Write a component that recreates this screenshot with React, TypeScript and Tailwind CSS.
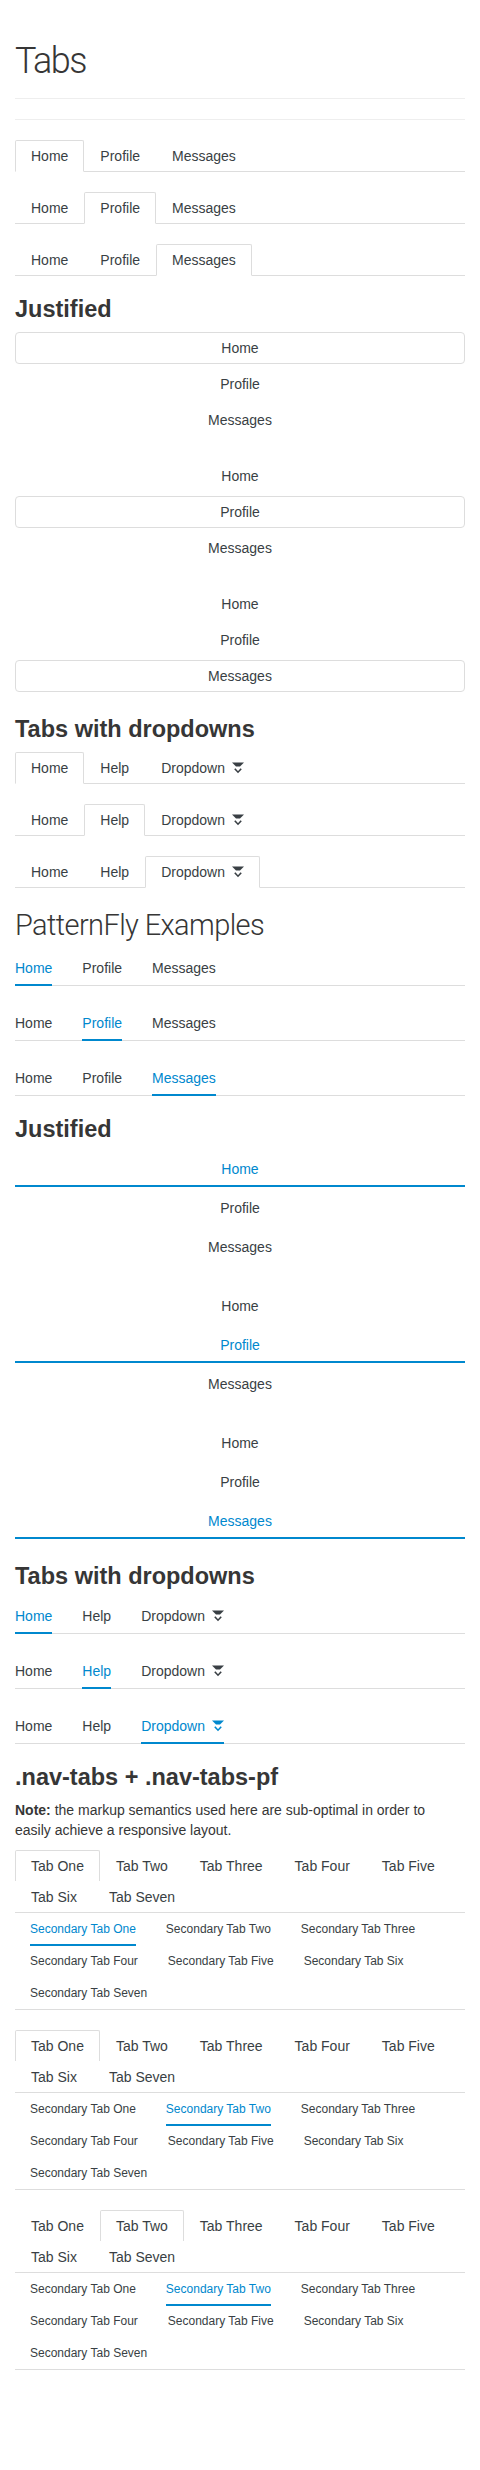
import clsx from "clsx";

function Caret({ className }: { className?: string }) {
  return (
    <svg width="12" height="13" viewBox="0 0 12 13" className={clsx("ml-[7px] inline-block", className)} fill="none">
      <polygon points="0,0.5 12,0.5 8,4.5 4,4.5" fill="currentColor" />
      <path d="M2.8 6.8 L6 10.2 L9.2 6.8" stroke="currentColor" strokeWidth="1.6" />
    </svg>
  );
}

function TabLabel({ label }: { label: string }) {
  if (label === "Dropdown") {
    return (
      <span className="inline-flex items-center">
        Dropdown
        <Caret />
      </span>
    );
  }
  return <>{label}</>;
}

function ClassicTabs({ items, active }: { items: string[]; active: number }) {
  return (
    <ul className="mb-5 flex border-b border-[#ddd]">
      {items.map((t, i) => (
        <li key={t} className="-mb-px">
          <a
            className={clsx(
              "block rounded-t-[2px] border px-[15px] py-[5px] text-[14px] leading-[20px] text-[#393f44]",
              i === active ? "border-[#ddd] border-b-white bg-white" : "border-transparent"
            )}
          >
            <TabLabel label={t} />
          </a>
        </li>
      ))}
    </ul>
  );
}

function ClassicJustified({ active }: { active: number }) {
  return (
    <ul className="mb-5 flex flex-col">
      {["Home", "Profile", "Messages"].map((t, i) => (
        <li key={t} className="mb-[4px]">
          <a
            className={clsx(
              "block rounded-[4px] border py-[5px] text-center text-[14px] leading-[20px] text-[#393f44]",
              i === active ? "border-[#ddd]" : "border-transparent"
            )}
          >
            {t}
          </a>
        </li>
      ))}
    </ul>
  );
}

function PfTabs({ items, active }: { items: string[]; active: number }) {
  return (
    <ul className="mb-5 flex border-b border-[#ddd]">
      {items.map((t, i) => (
        <li
          key={t}
          className={clsx(
            "relative py-[7px] text-[14px] leading-[20px]",
            i > 0 && "ml-[30px]",
            i === active ? "text-[#0088ce]" : "text-[#393f44]"
          )}
        >
          <TabLabel label={t} />
          {i === active && <span className="absolute bottom-[-1px] left-0 right-0 h-[2px] bg-[#0088ce]" />}
        </li>
      ))}
    </ul>
  );
}

function PfJustified({ active }: { active: number }) {
  return (
    <ul className="mb-5 flex flex-col">
      {["Home", "Profile", "Messages"].map((t, i) => (
        <li
          key={t}
          className={clsx(
            "mb-[4px] border-b-2 pb-[6px] pt-[7px] text-center text-[14px] leading-[20px]",
            i === active ? "border-[#0088ce] text-[#0088ce]" : "border-transparent text-[#393f44]"
          )}
        >
          {t}
        </li>
      ))}
    </ul>
  );
}

const mainTabs = ["Tab One", "Tab Two", "Tab Three", "Tab Four", "Tab Five", "Tab Six", "Tab Seven"];
const secondaryTabs = [
  "Secondary Tab One",
  "Secondary Tab Two",
  "Secondary Tab Three",
  "Secondary Tab Four",
  "Secondary Tab Five",
  "Secondary Tab Six",
  "Secondary Tab Seven",
];

function TabsPf({ active, secondary }: { active: number; secondary: number }) {
  return (
    <div className="mb-5">
      <ul className="flex flex-wrap border-b border-[#ddd]">
        {mainTabs.map((t, i) => (
          <li key={t}>
            <a
              className={clsx(
                "block rounded-t-[2px] border border-b-0 px-[15px] py-[5px] text-[14px] leading-[20px] text-[#393f44]",
                i === active ? "border-[#ddd] bg-white" : "border-transparent"
              )}
            >
              {t}
            </a>
          </li>
        ))}
      </ul>
      <ul className="flex flex-wrap border-b border-[#ddd]">
        {secondaryTabs.map((t, i) => (
          <li
            key={t}
            className={clsx(
              "relative px-[15px] py-[6px] text-[12px] leading-[20px]",
              i === secondary ? "text-[#0088ce]" : "text-[#393f44]"
            )}
          >
            {t}
            {i === secondary && <span className="absolute bottom-[-1px] left-[15px] right-[15px] h-[2px] bg-[#0088ce]" />}
          </li>
        ))}
      </ul>
    </div>
  );
}

function H2({ children }: { children: React.ReactNode }) {
  return <h2 className="mb-[10px] text-[23.5px] font-bold leading-[26px] text-[#363636]">{children}</h2>;
}

export default function App() {
  const basic = ["Home", "Profile", "Messages"];
  const drop = ["Home", "Help", "Dropdown"];
  return (
    <div className="min-h-[2470px] bg-white px-[15px] font-['Liberation_Sans',Arial,sans-serif] text-[#363636]">
      <h1 className="border-b border-[#eee] pb-[17px] pt-[41px] font-['Roboto',sans-serif] text-[36px] font-light leading-[40px] tracking-[-1.5px] text-[#363636]">
        Tabs
      </h1>
      <div className="mb-5 mt-5 border-t border-[#eee]" />

      <ClassicTabs items={basic} active={0} />
      <ClassicTabs items={basic} active={1} />
      <ClassicTabs items={basic} active={2} />

      <H2>Justified</H2>
      <ClassicJustified active={0} />
      <ClassicJustified active={1} />
      <ClassicJustified active={2} />

      <H2>Tabs with dropdowns</H2>
      <ClassicTabs items={drop} active={0} />
      <ClassicTabs items={drop} active={1} />
      <ClassicTabs items={drop} active={2} />

      <h1 className="mb-[9px] pt-px font-['Roboto',sans-serif] text-[29px] font-light leading-[33px] tracking-[-0.6px] text-[#363636]">
        PatternFly Examples
      </h1>
      <PfTabs items={basic} active={0} />
      <PfTabs items={basic} active={1} />
      <PfTabs items={basic} active={2} />

      <H2>Justified</H2>
      <PfJustified active={0} />
      <PfJustified active={1} />
      <PfJustified active={2} />

      <H2>Tabs with dropdowns</H2>
      <PfTabs items={drop} active={0} />
      <PfTabs items={drop} active={1} />
      <PfTabs items={drop} active={2} />

      <H2>.nav-tabs + .nav-tabs-pf</H2>
      <p className="mb-[10px] text-[14px] leading-[20px] text-[#363636]">
        <strong>Note:</strong> the markup semantics used here are sub-optimal in order to
        <br />
        easily achieve a responsive layout.
      </p>
      <TabsPf active={0} secondary={0} />
      <TabsPf active={0} secondary={1} />
      <TabsPf active={1} secondary={1} />
    </div>
  );
}
